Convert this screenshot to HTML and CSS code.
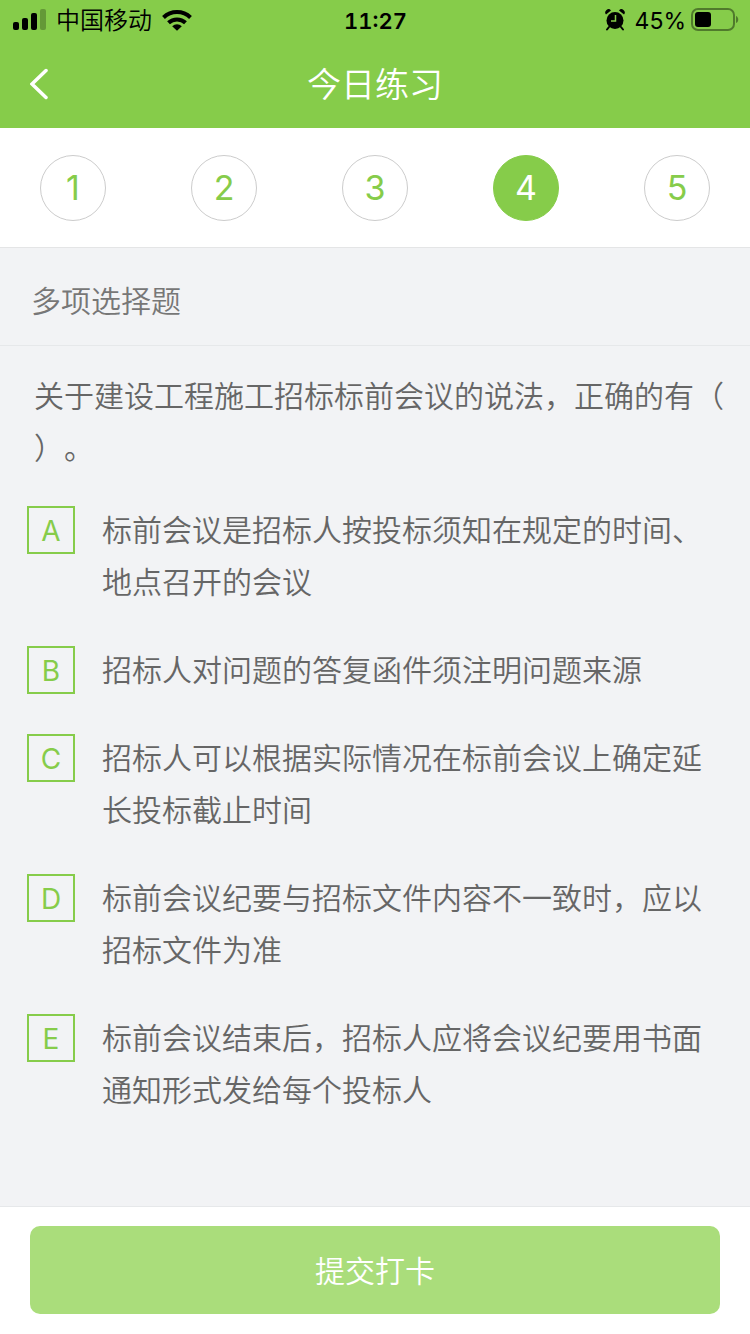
FILE: index.html
```html
<!DOCTYPE html>
<html lang="zh-CN">
<head>
    <meta charset="UTF-8">
    <meta name="viewport" content="width=device-width, initial-scale=1.0">
    <title>今日练习</title>
    <link rel="stylesheet" href="styles.css">
</head>
<body>
<div class="page">
    <header class="header">
        <div class="status">
            <div class="status-left">
                <svg width="34" height="22" viewBox="0 0 34 22">
                    <rect x="1" y="13" width="6" height="8" rx="2"/>
                    <rect x="10" y="9" width="6" height="12" rx="2"/>
                    <rect x="19" y="4" width="6" height="17" rx="2"/>
                    <rect x="28" y="0" width="6" height="21" rx="2" opacity="0.25"/>
                </svg>
                <span class="carrier">中国移动</span>
                <svg width="30" height="22" viewBox="0 0 30 22">
                    <g fill="none" stroke="#000" stroke-width="4">
                        <path d="M1.5 8.5a19.5 19.5 0 0 1 27 0"/>
                        <path d="M6.5 13.8a12.3 12.3 0 0 1 17 0"/>
                    </g>
                    <path d="M15 21.8l-4.8-4.6a7 7 0 0 1 9.6 0z"/>
                </svg>
            </div>
            <span class="time">11:27</span>
            <div class="status-right">
                <svg width="20" height="22" viewBox="0 0 20 22">
                    <circle cx="10" cy="11.5" r="8.5"/>
                    <path d="M1 5.5a3 3 0 0 1 5-4zM19 5.5a3 3 0 0 0-5-4z"/>
                    <path d="M4 18l-2 2.500M16 18l2 2.500" stroke="#000" stroke-width="2" stroke-linecap="round"/>
                    <path d="M10.500 6v6H6" fill="none" stroke="#86cc4a" stroke-width="1.500"/>
                </svg>
                <span class="percent">45%</span>
                <svg width="48" height="24" viewBox="0 0 48 24">
                    <rect x="1" y="1" width="42" height="21" rx="6" fill="none" stroke="#000" stroke-width="2" opacity="0.4"/>
                    <rect x="4" y="4" width="16" height="15" rx="3"/>
                    <path d="M45 8c3 1 3 6 0 7z" opacity="0.4"/>
                </svg>
            </div>
        </div>
        <div class="nav">
            <button class="back" aria-label="返回">
                <svg width="20" height="32" viewBox="0 0 20 32">
                    <path d="M16 2.500L2 16l14 13.500" fill="none" stroke="#fff" stroke-width="3.500" stroke-linecap="round"/>
                </svg>
            </button>
            <h1>今日练习</h1>
        </div>
    </header>

    <nav class="steps">
        <button class="step">1</button>
        <button class="step">2</button>
        <button class="step">3</button>
        <button class="step active">4</button>
        <button class="step">5</button>
    </nav>

    <h2 class="type">多项选择题</h2>

    <main class="content">
        <p class="question">关于建设工程施工招标标前会议的说法，正确的有（<wbr>）。</p>
        <div class="options">
            <label class="option">
                <span class="mark"><input type="checkbox" name="answer" value="A"><span>A</span></span>
                <span class="text">标前会议是招标人按投标须知在规定的时间、地点召开的会议</span>
            </label>
            <label class="option">
                <span class="mark"><input type="checkbox" name="answer" value="B"><span>B</span></span>
                <span class="text">招标人对问题的答复函件须注明问题来源</span>
            </label>
            <label class="option">
                <span class="mark"><input type="checkbox" name="answer" value="C"><span>C</span></span>
                <span class="text">招标人可以根据实际情况在标前会议上确定延长投标截止时间</span>
            </label>
            <label class="option">
                <span class="mark"><input type="checkbox" name="answer" value="D"><span>D</span></span>
                <span class="text">标前会议纪要与招标文件内容不一致时，应以招标文件为准</span>
            </label>
            <label class="option">
                <span class="mark"><input type="checkbox" name="answer" value="E"><span>E</span></span>
                <span class="text">标前会议结束后，招标人应将会议纪要用书面通知形式发给每个投标人</span>
            </label>
        </div>
    </main>

    <footer class="footer">
        <button class="submit">提交打卡</button>
    </footer>
</div>
</body>
</html>
```
FILE: styles.css
```css
* {
    margin: 0;
    padding: 0;
    box-sizing: border-box;
}

body {
    font-family: Inter, "Noto Sans CJK SC", sans-serif;
    font-size: 30px;
    font-weight: 350;
    color: #666;
    background-color: #f2f3f5;
    text-spacing-trim: space-all;
}

button {
    font-family: inherit;
    font-weight: inherit;
    border: none;
    background: none;
}

.page {
    display: flex;
    flex-direction: column;
    min-height: 100vh;
}

/* header */
.header {
    background-color: #86cc4a;
}

.status {
    display: grid;
    grid-template-columns: 1fr auto 1fr;
    align-items: center;
    height: 40px;
    padding: 0 11px 0 12px;
    color: #000;
    font-size: 24px;
    line-height: 38px;
}

.status-left,
.status-right {
    display: flex;
    align-items: center;
}

.status-left {
    gap: 10px;
}

.status-right {
    justify-content: flex-end;
    gap: 5px;
}

.carrier,
.time,
.percent {
    padding-top: 2px;
}

.time {
    font-size: 22px;
    font-weight: 600;
    font-variant-numeric: tabular-nums;
}

.percent {
    margin-left: 5px;
    font-size: 23px;
    font-weight: 400;
}

.nav {
    display: grid;
    grid-template-columns: 80px 1fr 80px;
    align-items: center;
    height: 88px;
}

.back {
    display: flex;
    align-items: center;
    height: 88px;
    padding-left: 30px;
}

.nav h1 {
    padding-top: 2px;
    font-size: 34px;
    font-weight: 350;
    line-height: 86px;
    text-align: center;
    color: #fff;
}

/* question numbers */
.steps {
    display: flex;
    justify-content: space-between;
    align-items: center;
    height: 120px;
    padding: 0 40px;
    background-color: #fff;
    border-bottom: 1px solid #e4e5e6;
}

.step {
    width: 66px;
    height: 66px;
    border: 1px solid #ccc;
    border-radius: 50%;
    font-size: 34px;
    font-weight: 400;
    color: #86cc4a;
}

.step.active {
    background-color: #86cc4a;
    border-color: #86cc4a;
    color: #fff;
}

.type {
    padding: 27px 31px 17px;
    font-size: 30px;
    font-weight: 350;
    line-height: 53px;
    color: #777;
    border-bottom: 1px solid #e6e8ea;
}

.content {
    flex: 1;
    padding: 24px 26px 30px 27px;
    line-height: 52px;
}

.question {
    padding-left: 7px;
    line-break: anywhere;
}

.options {
    display: flex;
    flex-direction: column;
    gap: 36px;
    margin-top: 30px;
}

.option {
    display: flex;
    align-items: flex-start;
    gap: 27px;
    padding-right: 20px;
}

.mark {
    display: grid;
    flex: none;
    place-items: center;
    width: 48px;
    height: 52px;
    font-size: 28px;
    font-weight: 400;
    line-height: 50px;
    color: #86cc4a;
}

.mark input,
.mark span {
    grid-area: 1 / 1;
}

.mark span {
    padding-top: 2px;
}

.mark input {
    appearance: none;
    width: 48px;
    height: 48px;
    border: 2px solid #86cc4a;
}

.mark input:checked {
    background-color: #86cc4a;
}

.mark input:checked + span {
    color: #fff;
}

/* bottom bar */
.footer {
    padding: 19px 30px 20px;
    background-color: #fff;
    border-top: 1px solid #e6e8ea;
}

.submit {
    display: block;
    width: 100%;
    height: 88px;
    padding-bottom: 2px;
    border-radius: 10px;
    background-color: #aadd7b;
    color: #fff;
    font-size: 30px;
}
```
